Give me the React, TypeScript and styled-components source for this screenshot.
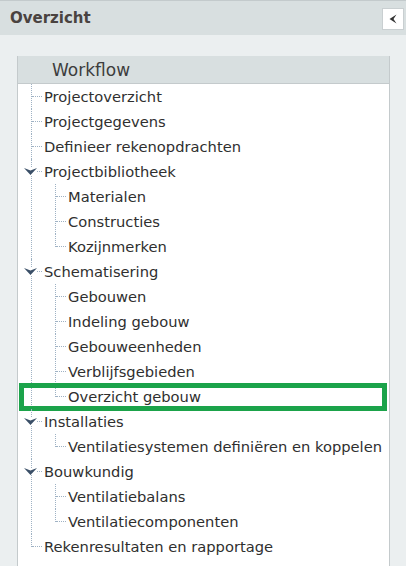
import styled, { createGlobalStyle } from "styled-components";

type TreeNode = {
  label: string;
  children?: TreeNode[];
  selected?: boolean;
};

const tree: TreeNode[] = [
  { label: "Projectoverzicht" },
  { label: "Projectgegevens" },
  { label: "Definieer rekenopdrachten" },
  {
    label: "Projectbibliotheek",
    children: [{ label: "Materialen" }, { label: "Constructies" }, { label: "Kozijnmerken" }],
  },
  {
    label: "Schematisering",
    children: [
      { label: "Gebouwen" },
      { label: "Indeling gebouw" },
      { label: "Gebouweenheden" },
      { label: "Verblijfsgebieden" },
      { label: "Overzicht gebouw", selected: true },
    ],
  },
  {
    label: "Installaties",
    children: [{ label: "Ventilatiesystemen definiëren en koppelen" }],
  },
  {
    label: "Bouwkundig",
    children: [{ label: "Ventilatiebalans" }, { label: "Ventilatiecomponenten" }],
  },
  { label: "Rekenresultaten en rapportage" },
];

const GlobalStyle = createGlobalStyle`
  html, body {
    margin: 0;
    padding: 0;
    background: #ebeff0;
  }
  * {
    box-sizing: border-box;
  }
`;

const Sidebar = styled.div`
  width: 406px;
  height: 566px;
  background: #ebeff0;
  font-family: "DejaVu Sans", Tahoma, sans-serif;
  overflow: hidden;
`;

const Header = styled.div`
  height: 35px;
  border-top: 1px solid #c3cacc;
  background: #d8dfe0;
  display: flex;
  align-items: center;
  justify-content: space-between;
  padding: 0 2px 0 10px;
`;

const Title = styled.h2`
  margin: 0;
  font-size: 15px;
  font-weight: 700;
  color: #4a4340;
`;

const CollapseButton = styled.button`
  width: 22px;
  height: 22px;
  margin-top: 2px;
  padding: 0;
  border: 1px solid #c9cfd1;
  background: #ffffff;
  display: flex;
  align-items: center;
  justify-content: center;
  cursor: pointer;
`;

const Body = styled.div`
  padding: 21px 16px 0 17px;
`;

const Panel = styled.section`
  border-left: 1px solid #c4cacc;
  border-right: 1px solid #c4cacc;
  background: #ffffff;
  height: 600px;
`;

const PanelHeader = styled.div`
  height: 28px;
  background: #d8dfe0;
  border-bottom: 1px solid #c4cacc;
  display: flex;
  align-items: center;
  padding-left: 34px;
  font-size: 17px;
  color: #3d3d3d;
`;

const List = styled.ul`
  list-style: none;
  margin: 0;
  padding: 0;
`;

const Item = styled.li<{ $level: number }>`
  position: relative;
  &::before {
    content: "";
    position: absolute;
    left: ${(p) => 13 + p.$level * 24}px;
    top: 0;
    bottom: 0;
    border-left: 1px dotted #9fb2c4;
  }
  &:last-child::before {
    bottom: auto;
    height: 13px;
  }
`;

const Row = styled.div<{ $level: number }>`
  position: relative;
  height: 25px;
  display: flex;
  align-items: center;
  padding-left: ${(p) => 26 + p.$level * 24}px;
  font-size: 14.7px;
  color: #2f2f2f;
  white-space: nowrap;
  &::before {
    content: "";
    position: absolute;
    left: ${(p) => 14 + p.$level * 24}px;
    top: 12px;
    width: 10px;
    border-top: 1px dotted #9fb2c4;
  }
`;

const Highlight = styled.div`
  position: absolute;
  left: 1px;
  right: 2px;
  top: -1px;
  bottom: -2px;
  border: 5px solid #1ba34a;
  pointer-events: none;
`;

const Toggle = styled.svg`
  position: absolute;
  left: 6px;
  top: 9px;
  background: #ffffff;
`;

const TreeItem = ({ node, level }: { node: TreeNode; level: number }) => (
  <Item $level={level}>
    <Row $level={level}>
      {node.children && (
        <Toggle width="13" height="7" viewBox="0 0 13 7">
          <path d="M0 0 L6.5 2.6 L13 0 L6.5 7 Z" fill="#3b5068" />
        </Toggle>
      )}
      {node.label}
      {node.selected && <Highlight />}
    </Row>
    {node.children && (
      <List>
        {node.children.map((c) => (
          <TreeItem key={c.label} node={c} level={level + 1} />
        ))}
      </List>
    )}
  </Item>
);

export default function App() {
  return (
    <>
      <GlobalStyle />
      <Sidebar>
        <Header>
          <Title>Overzicht</Title>
          <CollapseButton aria-label="Inklappen">
            <svg width="8" height="10" viewBox="0 0 8 10">
              <path d="M7.5 0.5 L0.5 5 L7.5 9.5 L4.5 5 Z" fill="#333333" />
            </svg>
          </CollapseButton>
        </Header>
        <Body>
          <Panel>
            <PanelHeader>Workflow</PanelHeader>
            <List>
              {tree.map((n) => (
                <TreeItem key={n.label} node={n} level={0} />
              ))}
            </List>
          </Panel>
        </Body>
      </Sidebar>
    </>
  );
}
